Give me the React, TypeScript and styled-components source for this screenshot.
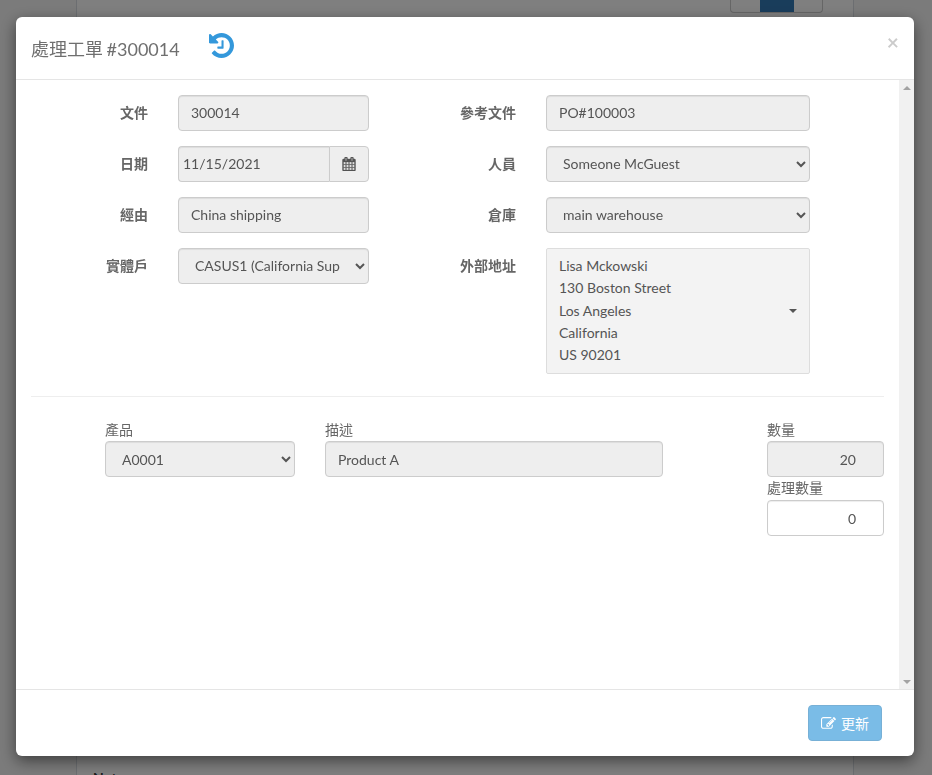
import React from 'react'
import styled, { createGlobalStyle } from 'styled-components'

const Global = createGlobalStyle`
  * { box-sizing: border-box; }
  html, body { margin: 0; height: 100%; overflow: hidden; }
  body {
    font-family: Lato, "Noto Sans CJK TC", sans-serif;
    font-size: 14px;
    color: #555;
    background: #fff;
  }
`

const Page = styled.div`
  height: 775px;
  padding: 0 78px 0 76px;
  background: #f7f7f7;
`

const PageColumn = styled.div`
  height: 100%;
  border-left: 1px solid #d8dde3;
  border-right: 1px solid #d8dde3;
  background: #fff;
  display: flex;
  flex-direction: column;
  justify-content: space-between;
  align-items: flex-start;
`

const PagerTop = styled.div`
  align-self: flex-end;
  margin-right: 30px;
  width: 93px;
  height: 13px;
  border: 1px solid #ccc;
  border-top: 0;
  border-radius: 0 0 4px 4px;
  display: flex;
  justify-content: center;
`

const PagerActive = styled.div`
  width: 34px;
  background: #337ab7;
`

const PageFoot = styled.div`
  margin: 0 0 -11px 16px;
  font-weight: 700;
  color: #333;
`

const Backdrop = styled.div`
  position: fixed;
  inset: 0;
  background: rgba(0, 0, 0, 0.5);
  padding: 17px 18px 19px 16px;
`

const Modal = styled.div`
  height: 739px;
  display: flex;
  flex-direction: column;
  background: #fff;
  border-radius: 6px;
  box-shadow: 0 5px 15px rgba(0, 0, 0, 0.5);
`

const Header = styled.div`
  height: 63px;
  flex: none;
  display: flex;
  align-items: flex-start;
  padding: 0 15px;
  border-bottom: 1px solid #e5e5e5;
`

const Title = styled.h4`
  margin: 21px 0 0;
  font-size: 18px;
  font-weight: 400;
  line-height: 22px;
  word-spacing: -1px;
  color: #6f6f6f;
`

const HistoryGlyph = styled.svg`
  width: 25px;
  height: 25px;
  margin: 16px 0 0 29px;
  fill: #3498db;
`

const Close = styled.span`
  margin: 14px 0 0 auto;
  font-size: 21px;
  font-weight: 700;
  line-height: 21px;
  color: #000;
  opacity: 0.2;
`

const BodyRow = styled.div`
  flex: 1;
  min-height: 0;
  display: flex;
`

const Body = styled.div`
  flex: 1;
  min-width: 0;
  padding: 15px;
`

const ScrollTrack = styled.div`
  flex: none;
  width: 15px;
  display: flex;
  flex-direction: column;
  justify-content: space-between;
  align-items: center;
  padding: 6px 0 5px;
  background: #f1f1f1;
`

const ScrollArrow = styled.span<{ $down?: boolean }>`
  border-left: 4px solid transparent;
  border-right: 4px solid transparent;
  border-top: ${(p) => (p.$down ? '4px solid #a3a3a3' : '0')};
  border-bottom: ${(p) => (p.$down ? '0' : '4px solid #a3a3a3')};
`

const TopForm = styled.div`
  display: grid;
  grid-template-columns: 338px 441px;
  margin-top: -0.4px;
  padding-bottom: 22.4px;
  border-bottom: 1px solid #eee;
`

const FormColumn = styled.div`
  display: flex;
  flex-direction: column;
  gap: 15px;
`

const Field = styled.div<{ $wide?: boolean }>`
  display: grid;
  grid-template-columns: ${(p) => (p.$wide ? '147px 264px' : '117px 191px')};
  column-gap: 30px;
`

const FieldLabel = styled.label`
  font-weight: 700;
  line-height: 36px;
  text-align: right;
  color: #666;
`

const controlStyle = `
  display: block;
  width: 100%;
  height: 36px;
  padding: 6px 12px;
  font-family: inherit;
  font-size: 14px;
  line-height: 20px;
  color: #555;
  background: #eee;
  border: 1px solid #ccc;
  border-radius: 4px;
  box-shadow: inset 0 1px 1px rgba(0, 0, 0, 0.075);
  outline: none;
`

const TextInput = styled.input<{ $editable?: boolean; $number?: boolean }>`
  ${controlStyle}
  background: ${(p) => (p.$editable ? '#fff' : '#eee')};
  text-align: ${(p) => (p.$number ? 'right' : 'left')};
`

const Select = styled.select`
  ${controlStyle}
`

const DateGroup = styled.div`
  display: flex;
  height: 36px;
`

const DateInput = styled.input`
  ${controlStyle}
  flex: 1;
  min-width: 0;
  padding: 6px 4px;
  border-radius: 4px 0 0 4px;
  border-right: 0;
`

const DateAddon = styled.span`
  width: 40px;
  display: flex;
  align-items: center;
  justify-content: center;
  background: #eee;
  border: 1px solid #ccc;
  border-radius: 0 4px 4px 0;
`

const CalendarGlyph = styled.svg`
  width: 14px;
  height: 14px;
  fill: #555;
  stroke: #555;
  stroke-width: 50;
`

const AddressBox = styled.div`
  position: relative;
  padding: 6.4px 12px 6.6px;
  line-height: 22.3px;
  background: #f3f3f3;
  border: 1px solid #ddd;
  border-radius: 2px;
`

const Caret = styled.span`
  position: absolute;
  right: 12px;
  top: 60px;
  border-top: 4px solid #555;
  border-left: 4px solid transparent;
  border-right: 4px solid transparent;
`

const LineItems = styled.div`
  display: grid;
  grid-template-columns: 190px 338px 1fr 117px;
  column-gap: 30px;
  padding: 25px 0 0 74px;
`

const LineField = styled.div`
  display: flex;
  flex-direction: column;
`

const LineLabel = styled.label<{ $next?: boolean }>`
  height: ${(p) => (p.$next ? '23px' : '19px')};
  line-height: ${(p) => (p.$next ? '22px' : '16px')};
  color: #666;
`

const Footer = styled.div`
  height: 67px;
  flex: none;
  display: flex;
  justify-content: flex-end;
  padding: 15px 32px 15px 15px;
  border-top: 1px solid #e5e5e5;
`

const SaveButton = styled.button`
  height: 36px;
  width: 74px;
  display: flex;
  align-items: center;
  justify-content: center;
  gap: 5px;
  font: inherit;
  color: #fff;
  background: #3498db;
  border: 1px solid #2e86c1;
  border-radius: 4px;
  opacity: 0.65;
`

const EditGlyph = styled.svg`
  width: 15px;
  height: 15px;
  fill: #fff;
`

export default function App() {
  return (
    <>
      <Global />
      <Page>
        <PageColumn>
          <PagerTop>
            <PagerActive />
          </PagerTop>
          <PageFoot>Notes</PageFoot>
        </PageColumn>
      </Page>
      <Backdrop>
        <Modal>
          <Header>
            <Title>處理工單 #300014</Title>
            <HistoryGlyph viewBox="128 128 1536 1536">
              <path d="M1664 896q0 156-61 298t-164 245-245 164-298 61q-172 0-327-72.5t-264-204.5q-7-10-6.5-22.5t8.5-20.5l137-138q10-9 25-9 16 2 23 12 73 95 179 147t225 52q104 0 198.5-40.5t163.5-109.5 109.5-163.5 40.5-198.5-40.5-198.5-109.5-163.5-163.5-109.5-198.5-40.5q-98 0-188 35.5t-160 101.5l137 138q31 30 14 69-17 40-59 40h-448q-26 0-45-19t-19-45v-448q0-42 40-59 39-17 69 14l130 129q107-101 244.5-156.5t284.5-55.5q156 0 298 61t245 164 164 245 61 298zm-640-288v448q0 14-9 23t-23 9h-320q-14 0-23-9t-9-23v-64q0-14 9-23t23-9h224v-352q0-14 9-23t23-9h64q14 0 23 9t9 23z" />
            </HistoryGlyph>
            <Close>×</Close>
          </Header>
          <BodyRow>
            <Body>
              <TopForm>
                <FormColumn>
                  <Field>
                    <FieldLabel>文件</FieldLabel>
                    <TextInput readOnly value="300014" />
                  </Field>
                  <Field>
                    <FieldLabel>日期</FieldLabel>
                    <DateGroup>
                      <DateInput readOnly value="11/15/2021" />
                      <DateAddon>
                        <CalendarGlyph viewBox="0 0 1792 1792">
                          <path d="M192 1664h288v-288h-288v288zm352 0h320v-288h-320v288zm-352-352h288v-320h-288v320zm352 0h320v-320h-320v320zm-352-384h288v-288h-288v288zm736 736h320v-288h-320v288zm-384-736h320v-288h-320v288zm768 736h288v-288h-288v288zm-384-352h320v-320h-320v320zm-352-864v-288q0-13-9.5-22.5t-22.5-9.5h-64q-13 0-22.5 9.5t-9.5 22.5v288q0 13 9.5 22.5t22.5 9.5h64q13 0 22.5-9.5t9.5-22.5zm736 864h288v-320h-288v320zm-384-384h320v-288h-320v288zm384 0h288v-288h-288v288zm32-480v-288q0-13-9.5-22.5t-22.5-9.5h-64q-13 0-22.5 9.5t-9.5 22.5v288q0 13 9.5 22.5t22.5 9.5h64q13 0 22.5-9.5t9.5-22.5zm384-64v1280q0 52-38 90t-90 38h-1408q-52 0-90-38t-38-90v-1280q0-52 38-90t90-38h128v-96q0-66 47-113t113-47h64q66 0 113 47t47 113v96h384v-96q0-66 47-113t113-47h64q66 0 113 47t47 113v96h128q52 0 90 38t38 90z" />
                        </CalendarGlyph>
                      </DateAddon>
                    </DateGroup>
                  </Field>
                  <Field>
                    <FieldLabel>經由</FieldLabel>
                    <TextInput readOnly value="China shipping" />
                  </Field>
                  <Field>
                    <FieldLabel>實體戶</FieldLabel>
                    <Select defaultValue="c">
                      <option value="c">CASUS1 (California Supplier)</option>
                    </Select>
                  </Field>
                </FormColumn>
                <FormColumn>
                  <Field $wide>
                    <FieldLabel>參考文件</FieldLabel>
                    <TextInput readOnly value="PO#100003" />
                  </Field>
                  <Field $wide>
                    <FieldLabel>人員</FieldLabel>
                    <Select defaultValue="s">
                      <option value="s">Someone McGuest</option>
                    </Select>
                  </Field>
                  <Field $wide>
                    <FieldLabel>倉庫</FieldLabel>
                    <Select defaultValue="m">
                      <option value="m">main warehouse</option>
                    </Select>
                  </Field>
                  <Field $wide>
                    <FieldLabel>外部地址</FieldLabel>
                    <AddressBox>
                      Lisa Mckowski
                      <br />
                      130 Boston Street
                      <br />
                      Los Angeles
                      <br />
                      California
                      <br />
                      US 90201
                      <Caret />
                    </AddressBox>
                  </Field>
                </FormColumn>
              </TopForm>
              <LineItems>
                <LineField>
                  <LineLabel>產品</LineLabel>
                  <Select defaultValue="a">
                    <option value="a">A0001</option>
                  </Select>
                </LineField>
                <LineField>
                  <LineLabel>描述</LineLabel>
                  <TextInput readOnly value="Product A" />
                </LineField>
                <div />
                <LineField>
                  <LineLabel>數量</LineLabel>
                  <TextInput $number readOnly type="number" value="20" />
                  <LineLabel $next>處理數量</LineLabel>
                  <TextInput $number $editable readOnly type="number" value="0" />
                </LineField>
              </LineItems>
            </Body>
            <ScrollTrack>
              <ScrollArrow />
              <ScrollArrow $down />
            </ScrollTrack>
          </BodyRow>
          <Footer>
            <SaveButton disabled>
              <EditGlyph viewBox="0 0 1792 1792">
                <path d="M888 1184l116-116-152-152-116 116v56h96v96h56zm440-720q-16-16-33 1l-350 350q-17 17-1 33t33-1l350-350q17-17 1-33zm80 594v190q0 119-84.5 203.5t-203.5 84.5h-832q-119 0-203.5-84.5t-84.5-203.5v-832q0-119 84.5-203.5t203.5-84.5h832q63 0 117 25 15 7 18 23 3 17-9 29l-49 49q-14 14-32 8-23-6-45-6h-832q-66 0-113 47t-47 113v832q0 66 47 113t113 47h832q66 0 113-47t47-113v-126q0-13 9-22l64-64q15-15 35-7t20 29zm-96-738l288 288-672 672h-288v-288zm444 132l-92 92-288-288 92-92q28-28 68-28t68 28l152 152q28 28 28 68t-28 68z" />
              </EditGlyph>
              更新
            </SaveButton>
          </Footer>
        </Modal>
      </Backdrop>
    </>
  )
}
